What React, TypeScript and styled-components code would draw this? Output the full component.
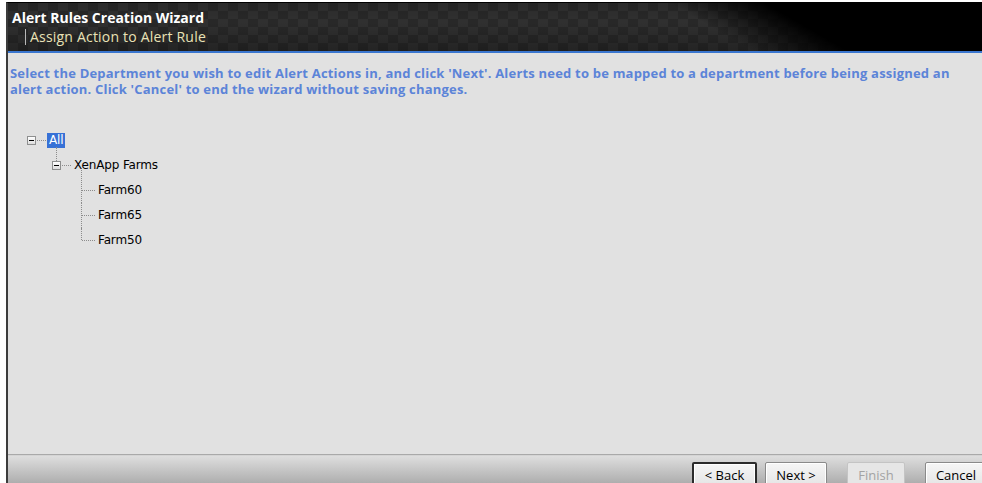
import React from "react";
import styled, { createGlobalStyle } from "styled-components";

const GlobalStyle = createGlobalStyle`
  html, body {
    margin: 0;
    padding: 0;
    background: #ffffff;
    overflow: hidden;
  }
  body {
    font-family: "DejaVu Sans", "Liberation Sans", sans-serif;
  }
`;

interface TreeNode {
  label: string;
  selected?: boolean;
  children?: TreeNode[];
}

const tree: TreeNode = {
  label: "All",
  selected: true,
  children: [
    {
      label: "XenApp Farms",
      children: [{ label: "Farm60" }, { label: "Farm65" }, { label: "Farm50" }],
    },
  ],
};

interface TreeRowProps {
  node: TreeNode;
  level: number;
  first: boolean;
  last: boolean;
}

const TreeRowView = ({ node, level, first, last }: TreeRowProps) => {
  const expandable = !!node.children && node.children.length > 0;
  const count = node.children?.length ?? 0;
  return (
    <>
      <Row $level={level}>
        {level > 0 && (
          <Stem $level={level} $expandable={expandable} $first={first} $last={last} />
        )}
        {expandable ? (
          <Expander>
            <Minus />
          </Expander>
        ) : (
          <LeafSlot />
        )}
        <Connector $leaf={!expandable} />
        <Label $selected={node.selected}>{node.label}</Label>
      </Row>
      {node.children?.map((child, i) => (
        <TreeRowView
          key={child.label}
          node={child}
          level={level + 1}
          first={i === 0}
          last={i === count - 1}
        />
      ))}
    </>
  );
};

const App = () => {
  return (
    <>
      <GlobalStyle />
      <Window>
        <Header>
          <Title>Alert Rules Creation Wizard</Title>
          <SubTitle>
            <Bar />
            Assign Action to Alert Rule
          </SubTitle>
        </Header>
        <Body>
          <Instructions>
            Select the Department you wish to edit Alert Actions in, and click 'Next'. Alerts need to be
            mapped to a department before being assigned an alert action. Click 'Cancel' to end the
            wizard without saving changes.
          </Instructions>
          <Tree>
            <TreeRowView node={tree} level={0} first last />
          </Tree>
        </Body>
        <Footer>
          <Button $default $width={65}>&lt; Back</Button>
          <Button $width={62}>Next &gt;</Button>
          <Button disabled $gap $width={58}>Finish</Button>
          <Button $gap $width={62}>Cancel</Button>
        </Footer>
      </Window>
    </>
  );
};

const Window = styled.div`
  margin: 2px 0 0 6px;
  width: 982px;
  height: 481px;
  box-sizing: border-box;
  display: flex;
  flex-direction: column;
  border-left: 2px solid #3c3c3c;
  border-top: 1px solid #000;
  background: #e1e1e1;
`;

const Header = styled.div`
  flex: none;
  height: 50px;
  padding: 6px 0 0 4px;
  box-sizing: border-box;
  border-bottom: 2px solid #3a76cf;
  background:
    linear-gradient(30deg, rgba(0, 0, 0, 0) 70%, #000 79%),
    linear-gradient(to bottom, rgba(0, 0, 0, 0.1), rgba(0, 0, 0, 0) 40%, rgba(0, 0, 0, 0.25)),
    repeating-conic-gradient(#303030 0 25%, #282828 0 50%) 0 0 / 20px 16px;
`;

const Title = styled.div`
  font-family: "Open Sans", "Liberation Sans", sans-serif;
  font-weight: 700;
  font-size: 14px;
  letter-spacing: 0;
  line-height: 18px;
  color: #ffffff;
`;

const SubTitle = styled.div`
  display: flex;
  align-items: center;
  margin-top: 1px;
  padding-left: 13px;
  font-family: "Open Sans", "Liberation Sans", sans-serif;
  font-size: 14px;
  letter-spacing: 0.2px;
  line-height: 18px;
  color: #e9e2b6;
`;

const Bar = styled.span`
  width: 1px;
  height: 16px;
  margin-right: 4px;
  background: #b8b8b8;
`;

const Body = styled.div`
  flex: 1;
  padding: 12px 0 0 2px;
  border-bottom: 1px solid #a9a9a9;
`;

const Instructions = styled.p`
  margin: 0;
  width: 950px;
  font-family: "Open Sans", "Liberation Sans", sans-serif;
  font-weight: 700;
  font-size: 13px;
  letter-spacing: 0.2px;
  line-height: 16px;
  color: #5c84d8;
`;

const Tree = styled.div`
  margin-top: 31px;
  padding-left: 17px;
`;

const Row = styled.div<{ $level: number }>`
  position: relative;
  display: flex;
  align-items: center;
  height: 25px;
  padding-left: ${(p) => p.$level * 25}px;
`;

// vertical dotted guide that links a node to its parent
const Stem = styled.span<{ $level: number; $expandable: boolean; $first: boolean; $last: boolean }>`
  position: absolute;
  left: ${(p) => p.$level * 25 + 4}px;
  top: ${(p) => (p.$expandable ? "-6px" : p.$first ? "-8px" : "0px")};
  height: ${(p) => {
    if (p.$expandable) return "14px";
    const top = p.$first ? 8 : 0;
    return `${top + (p.$last ? 12 : 25)}px`;
  }};
  border-left: 1px dotted #8c8c8c;
`;

const Expander = styled.span`
  display: flex;
  align-items: center;
  justify-content: center;
  width: 9px;
  height: 9px;
  box-sizing: border-box;
  border: 1px solid #8e8f8f;
  background: linear-gradient(#ffffff, #dcdcdc);
`;

const Minus = styled.span`
  width: 5px;
  height: 1px;
  background: #000;
`;

const LeafSlot = styled.span`
  width: 4px;
`;

const Connector = styled.span<{ $leaf: boolean }>`
  width: ${(p) => (p.$leaf ? "13px" : "9px")};
  margin: 0 1px;
  border-top: 1px dotted #8c8c8c;
`;

const Label = styled.span<{ $selected?: boolean }>`
  padding: 1px 2px;
  font-family: "DejaVu Sans", "Liberation Sans", sans-serif;
  font-size: 12px;
  letter-spacing: -0.15px;
  line-height: 13px;
  color: ${(p) => (p.$selected ? "#ffffff" : "#000000")};
  background: ${(p) => (p.$selected ? "#3771d6" : "transparent")};
`;

const Footer = styled.div`
  flex: none;
  height: 28px;
  display: flex;
  justify-content: flex-end;
  align-items: flex-start;
  padding: 6px 1px 0 0;
  box-sizing: border-box;
  border-top: 1px solid #d4d4d4;
  background: linear-gradient(#dedede, #aeaeae);
`;

const Button = styled.button<{ $default?: boolean; $gap?: boolean; $width: number }>`
  flex: none;
  width: ${(p) => p.$width}px;
  height: 26px;
  margin-left: ${(p) => (p.$gap ? "20px" : "8px")};
  padding: 0;
  font-family: "Open Sans", "Liberation Sans", sans-serif;
  font-size: 13px;
  letter-spacing: 0;
  color: #000;
  border-radius: 2px;
  border: ${(p) => (p.$default ? "2px solid #2b2b2b" : "1px solid #8a8a8a")};
  background: linear-gradient(#f6f6f6, #e4e4e4);
  box-shadow: inset 0 0 0 1px #ffffff;

  &:first-child {
    margin-left: 0;
  }

  &:disabled {
    color: #a3a3a3;
    border-color: #c4c4c4;
    background: #e6e6e6;
    box-shadow: none;
  }
`;

export default App;
